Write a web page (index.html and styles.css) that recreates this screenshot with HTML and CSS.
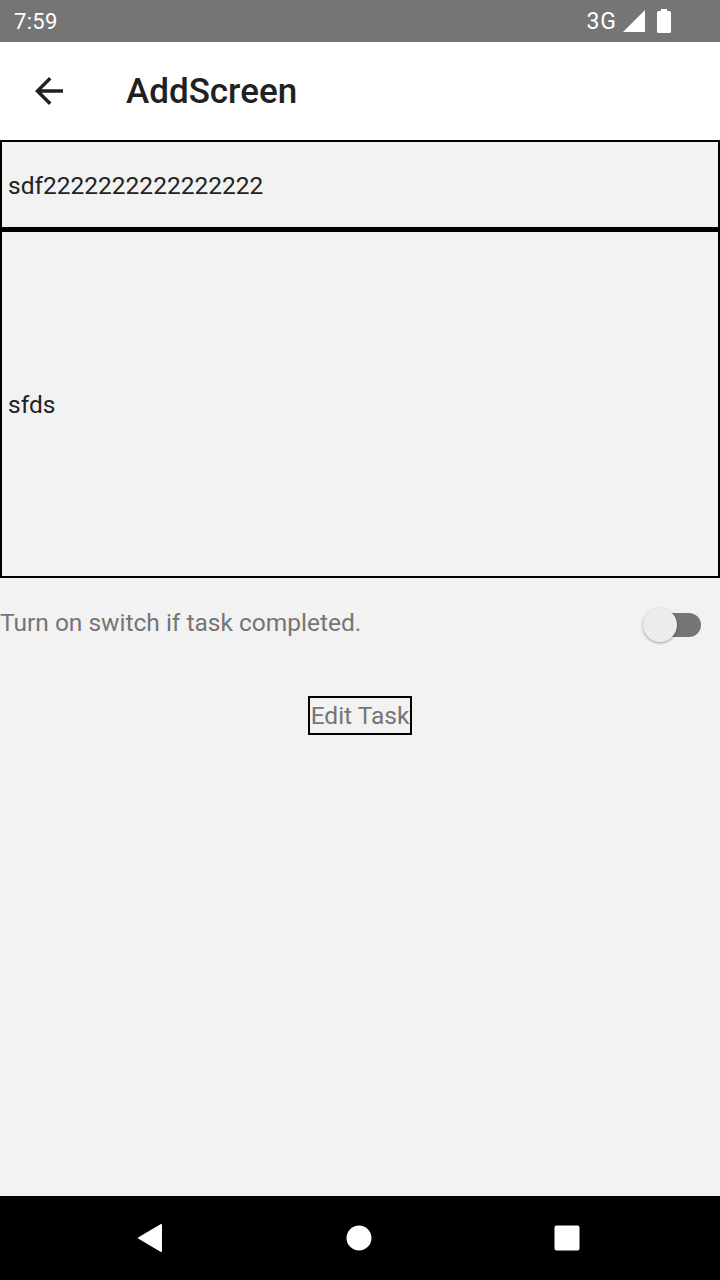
FILE: index.html
```html
<!DOCTYPE html>
<html>
<head>
<meta charset="utf-8">
<link rel="stylesheet" href="styles.css">
</head>
<body>
<div class="screen">
  <div class="status">
    <span class="time">7:59</span>
    <div class="status-right">
      <span class="net">3G</span>
      <svg class="signal" width="22" height="22" viewBox="0 0 22 22"><path d="M22 0V22H0Z" fill="#fff"/></svg>
      <svg class="battery" width="14" height="24" viewBox="0 0 14 24"><rect x="4" y="0" width="6" height="3" fill="#fff"/><rect x="0" y="2" width="14" height="22" rx="1.5" fill="#fff"/></svg>
    </div>
  </div>
  <div class="appbar">
    <svg class="back" width="42" height="42" viewBox="0 0 24 24"><path d="M20 11H7.83l5.59-5.59L12 4l-8 8 8 8 1.41-1.41L7.83 13H20v-2z" fill="#222"/></svg>
    <span class="title">AddScreen</span>
  </div>
  <div class="content">
    <div class="field field-title">sdf2222222222222222</div>
    <div class="field field-desc">sfds</div>
    <div class="switch-row">
      <span class="switch-label">Turn on switch if task completed.</span>
      <div class="switch"><div class="track"></div><div class="thumb"></div></div>
    </div>
    <div class="btn-row"><span class="btn">Edit Task</span></div>
  </div>
  <div class="navbar">
    <svg width="26" height="28" viewBox="0 0 26 28"><path d="M24 1V27L2 14Z" fill="#fff" stroke="#fff" stroke-width="2" stroke-linejoin="round"/></svg>
    <svg width="26" height="26" viewBox="0 0 26 26"><circle cx="13" cy="13" r="12.5" fill="#fff"/></svg>
    <svg width="26" height="26" viewBox="0 0 26 26"><rect x="0.5" y="0.5" width="25" height="25" rx="2" fill="#fff"/></svg>
  </div>
</div>
</body>
</html>
```
FILE: styles.css
```css
* { box-sizing: border-box; }
html, body { margin: 0; padding: 0; }
body { font-family: Roboto, "Noto Sans", sans-serif; background: #f2f2f2; }
.screen { width: 720px; height: 1280px; display: flex; flex-direction: column; background: #f2f2f2; overflow: hidden; }
.status { height: 42px; background: #757575; color: #fff; display: flex; align-items: center; justify-content: space-between; padding: 0 49px 0 14px; flex: none; }
.time { font-size: 22px; letter-spacing: 0.3px; }
.status-right { display: flex; align-items: center; }
.net { font-size: 23px; margin-right: 6px; letter-spacing: 1px; }
.signal { margin-right: 12px; }
.appbar { height: 98px; background: #fff; display: flex; align-items: center; flex: none; }
.back { margin-left: 28px; }
.title { margin-left: 56px; font-size: 35px; font-weight: 500; color: #212121; }
.content { flex: 1; display: flex; flex-direction: column; }
.field { border: 2px solid #000; background: #f2f2f2; color: #222; font-size: 24.5px; padding-left: 6px; display: flex; align-items: center; }
.field-title { height: 89px; padding-top: 1px; }
.field-desc { height: 349px; border-top-width: 3px; }
.switch-row { display: flex; align-items: center; justify-content: space-between; height: 90px; padding-right: 17px; }
.switch-label { color: #757575; font-size: 24.5px; margin-top: -2px; }
.switch { position: relative; width: 60px; height: 36px; margin-top: 4px; }
.track { position: absolute; left: 16px; top: 6px; width: 42px; height: 24px; border-radius: 12px; background: #757575; }
.thumb { position: absolute; left: 0; top: 1px; width: 34px; height: 34px; border-radius: 50%; background: #ececec; box-shadow: 0 1px 3px rgba(0,0,0,0.35); }
.btn-row { display: flex; justify-content: center; padding-top: 28px; }
.btn { border: 2px solid #000; color: #757575; font-size: 24.5px; padding: 2px 1px; line-height: 31px; }
.navbar { height: 84px; background: #000; display: flex; align-items: center; justify-content: space-between; padding: 0 140px 0 137px; flex: none; margin-top: auto; }
```
